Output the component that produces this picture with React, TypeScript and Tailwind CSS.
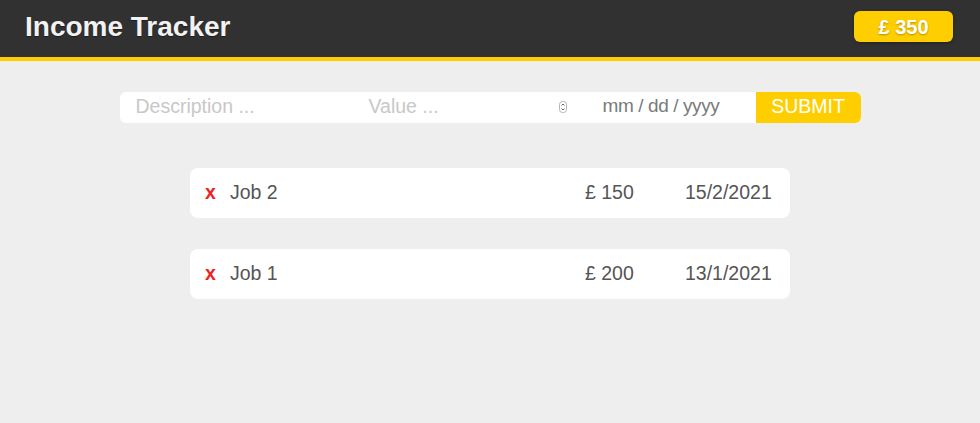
const entries = [
  { id: 2, desc: "Job 2", price: 150, date: "15/2/2021" },
  { id: 1, desc: "Job 1", price: 200, date: "13/1/2021" },
];

const Spinner = () => (
  <svg width="8" height="12" viewBox="0 0 8 12" className="shrink-0">
    <rect x="0.5" y="0.5" width="7" height="11" rx="3" fill="#fff" stroke="#b5b5b5" />
    <path d="M2.5 4.5 L4 3 L5.5 4.5" fill="none" stroke="#555" strokeWidth="0.9" />
    <path d="M2.5 7.5 L4 9 L5.5 7.5" fill="none" stroke="#555" strokeWidth="0.9" />
  </svg>
);

const App = () => {
  const total = entries.reduce((s, e) => s + e.price, 0);
  return (
    <div className="min-h-[423px] bg-[#eeeeee] font-['Liberation_Sans',Arial,sans-serif]">
      <header className="h-[61px] bg-[#313131] border-b-4 border-[#ffce00] flex items-start justify-between pl-[25px] pr-[27px]">
        <h1 className="mt-[6px] text-[28px] font-bold text-[#f2f2f2] [text-shadow:0_1px_1px_rgba(0,0,0,0.4)]">
          Income Tracker
        </h1>
        <div className="mt-[11px] w-[99px] h-[31px] rounded-[6px] bg-[#ffce00] shadow-[0_1px_3px_rgba(0,0,0,0.35)] flex items-center justify-center text-[20px] font-bold text-white [text-shadow:0_1px_2px_rgba(0,0,0,0.3)]">
          £ {total}
        </div>
      </header>

      <form className="mx-auto mt-[31px] w-[741px] h-[31px] flex bg-white rounded-[6px] overflow-hidden">
        <div className="w-[232px] flex items-center pb-[2px] pl-[16px] text-[19.5px] text-[#c8c8c8]">
          Description ...
        </div>
        <div className="w-[224px] flex items-center justify-between pb-[2px] pl-[17px] pr-[9px] text-[19.5px] text-[#c8c8c8]">
          <span>Value ...</span>
          <Spinner />
        </div>
        <div className="w-[180px] flex items-center pb-[2px] pl-[27px] text-[19px] text-[#7a7a7a] tracking-[-0.4px]">
          mm / dd / yyyy
        </div>
        <div className="w-[105px] bg-[#ffce00] flex items-center justify-center pb-[2px] text-[19.5px] text-white">
          SUBMIT
        </div>
      </form>

      <div className="mx-auto mt-[45px] w-[600px] flex flex-col gap-[31px]">
        {entries.map((e) => (
          <div
            key={e.id}
            className="h-[50px] bg-white rounded-[8px] flex items-center pl-[15px] pr-[17px] text-[19.5px] text-[#555555]"
          >
            <span className="w-[25px] font-bold text-[#ee2222]">x</span>
            <span className="flex-1">{e.desc}</span>
            <span className="w-[100px]">£ {e.price}</span>
            <span className="w-[88px]">{e.date}</span>
          </div>
        ))}
      </div>
    </div>
  );
};

export default App;
